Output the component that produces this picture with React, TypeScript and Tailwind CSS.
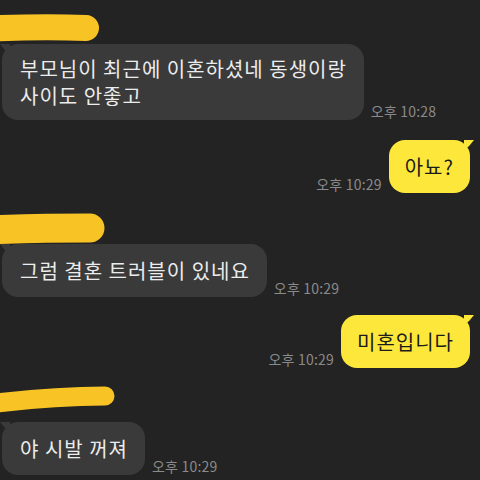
import React from "react"

const font = { fontFamily: '"Noto Sans CJK KR", "Noto Sans", sans-serif' }

const Scribble = ({ w, h, d, sw }: { w: number; h: number; d: string; sw: number }) => (
    <svg width={w} height={h} viewBox={`0 0 ${w} ${h}`} className="block">
        <path d={d} stroke="#f7c325" strokeWidth={sw} strokeLinecap="round" fill="none" />
    </svg>
)

const Time = ({ t }: { t: string }) => (
    <span className="text-[14px] leading-[16px] tracking-[0.2px] text-[#8a8a8a] whitespace-nowrap mb-[1px]">{t}</span>
)

const Incoming = ({ children, time, className }: { children: React.ReactNode; time: string; className?: string }) => (
    <div className={"flex flex-row items-end gap-[7px] pl-[2px] " + (className ?? "")}>
        <div className="relative rounded-[16px] bg-[#3a3a3a] pl-[18px] pr-[17px] py-[13px] text-[20px] leading-[27px] tracking-[1px] text-[#ececec] whitespace-nowrap">
            <svg width="10" height="10" viewBox="0 0 10 10" className="absolute left-[-2px] top-0">
                <path d="M0 0 L10 0 L10 10 Q4 6 0 0 Z" fill="#3a3a3a" />
            </svg>
            {children}
        </div>
        <Time t={time} />
    </div>
)

const Outgoing = ({ children, time, className }: { children: React.ReactNode; time: string; className?: string }) => (
    <div className={"flex flex-row items-end justify-end gap-[7px] pr-[10px] " + (className ?? "")}>
        <Time t={time} />
        <div className="relative rounded-[16px] bg-[#fde73a] px-[16px] py-[13px] text-[20px] leading-[27px] tracking-[1px] text-[#1b1b1b] whitespace-nowrap">
            <svg width="10" height="10" viewBox="0 0 10 10" className="absolute right-[-4px] top-0">
                <path d="M0 0 L10 0 Q6 6 0 10 Z" fill="#fde73a" />
            </svg>
            {children}
        </div>
    </div>
)

const App = () => {
    return (
        <div className="w-[480px] h-[480px] bg-[#232323] overflow-hidden flex flex-col" style={font}>
            <div className="mt-[14px]">
                <Scribble w={100} h={28} d="M-20 15 Q40 12 86 14" sw={26} />
            </div>
            <div className="mt-[2px] flex flex-row items-end gap-[7px] pl-[2px]">
                <div className="relative rounded-[16px] bg-[#3a3a3a] pl-[18px] pr-[17px] py-[11px] text-[20px] leading-[27px] tracking-[1px] text-[#ececec] whitespace-nowrap">
                    <svg width="10" height="10" viewBox="0 0 10 10" className="absolute left-[-2px] top-0">
                        <path d="M0 0 L10 0 L10 10 Q4 6 0 0 Z" fill="#3a3a3a" />
                    </svg>
                    부모님이 최근에 이혼하셨네 동생이랑<br />사이도 안좋고
                </div>
                <Time t="오후 10:28" />
            </div>
            <Outgoing time="오후 10:29" className="mt-[20px]">
                아뇨?
            </Outgoing>
            <div className="mt-[20px]">
                <Scribble w={106} h={31} d="M-20 17 Q40 15 90 15" sw={29} />
            </div>
            <Incoming time="오후 10:29">
                그럼 결혼 트러블이 있네요
            </Incoming>
            <Outgoing time="오후 10:29" className="mt-[18px]">
                미혼입니다
            </Outgoing>
            <div className="mt-[18px]">
                <Scribble w={116} h={28} d="M-20 19 Q50 10 105 10" sw={19} />
            </div>
            <Incoming time="오후 10:29" className="mt-[8px]">
                야 시발 꺼져
            </Incoming>
        </div>
    )
}

export default App
